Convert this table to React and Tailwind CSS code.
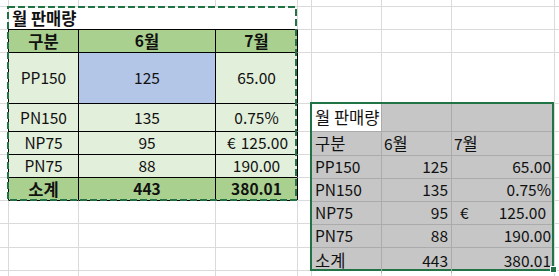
const grid = "border-l border-t border-[#dadada]";
const tb = "border-l border-t border-black";
const ko = "text-[16.5px]";

const rows = [
  { name: "PP150", jun: "125", jul: "65.00", h: true },
  { name: "PN150", jun: "135", jul: "0.75%" },
  { name: "NP75", jun: "95", jul: "125.00", euro: true },
  { name: "PN75", jun: "88", jul: "190.00" },
];

const pic = [
  ["구분", "6월", "7월", "head"],
  ["PP150", "125", "65.00"],
  ["PN150", "135", "0.75%"],
  ["NP75", "95", "125.00", "euro"],
  ["PN75", "88", "190.00"],
  ["소계", "443", "380.01"],
];

const Blank = ({ c }) => <div className={`${grid} ${c || ""}`} />;

const App = () => {
  return (
    <div className="relative w-[559px] h-[276px] overflow-hidden bg-white font-['Noto_Sans_CJK_KR',sans-serif] text-[15.5px] text-[#111]">
      {/* sheet */}
      <div className="-ml-px -mt-px w-[560px] grid grid-cols-[9px_70px_137px_82px_14px_70px_70px_103px_1fr] grid-rows-[7px_23px_23px_51px_28px_23px_23px_23px_23px_24px_23px_7px]">
        {/* row 1 */}
        {Array.from({ length: 9 }).map((_, i) => (
          <Blank key={"r0" + i} />
        ))}

        {/* title row */}
        <Blank />
        <div className={`${grid} ${ko} col-span-3 flex items-center pl-[3px] font-bold`}>월 판매량</div>
        {Array.from({ length: 5 }).map((_, i) => (
          <Blank key={"r1" + i} />
        ))}

        {/* header */}
        <Blank />
        <div className={`${tb} ${ko} bg-[#a9d08e] flex items-center justify-center font-bold`}>구분</div>
        <div className={`${tb} bg-[#a9d08e] flex items-center justify-center font-bold`}>
          6<span className={ko}>월</span>
        </div>
        <div className={`${tb} bg-[#a9d08e] flex items-center justify-center font-bold`}>
          7<span className={ko}>월</span>
        </div>
        <Blank c="!border-l-black" />
        <Blank />
        <Blank />
        <Blank />
        <Blank />

        {/* data */}
        {rows.map((r) => (
          <div key={r.name} className="contents">
            <Blank />
            <div className={`${tb} bg-[#e2efda] flex items-center justify-center`}>{r.name}</div>
            <div className={`${tb} ${r.h ? "bg-[#b4c6e7]" : "bg-[#e2efda]"} flex items-center justify-center`}>{r.jun}</div>
            {r.euro ? (
              <div className={`${tb} bg-[#e2efda] flex items-center justify-between pl-[11px] pr-[9px]`}>
                <span>€</span>
                <span>{r.jul}</span>
              </div>
            ) : (
              <div className={`${tb} bg-[#e2efda] flex items-center justify-center`}>{r.jul}</div>
            )}
            <Blank c="!border-l-black" />
            <Blank />
            <Blank />
            <Blank />
            <Blank />
          </div>
        ))}

        {/* total */}
        <Blank />
        <div className={`${tb} ${ko} bg-[#a9d08e] flex items-center justify-center font-bold`}>소계</div>
        <div className={`${tb} bg-[#a9d08e] flex items-center justify-center font-bold`}>443</div>
        <div className={`${tb} bg-[#a9d08e] flex items-center justify-center font-bold`}>380.01</div>
        <Blank c="!border-l-black" />
        <Blank />
        <Blank />
        <Blank />
        <Blank />

        {/* empty rows */}
        {Array.from({ length: 36 }).map((_, i) => (
          <Blank key={"e" + i} c={i > 0 && i < 4 ? "!border-t-black" : ""} />
        ))}
      </div>

      {/* copy marquee */}
      <svg className="absolute left-[7px] top-[6px] pointer-events-none" width="291" height="196">
        <rect x="1" y="1" width="288" height="193" fill="none" stroke="#217346" strokeWidth="2" strokeDasharray="7 3" />
      </svg>

      {/* pasted picture */}
      <div className="absolute left-[310px] top-[102px] w-[244px] h-[169px] border-2 border-[#217346] bg-[#c6c6c6]">
        <div className="grid h-full grid-cols-[69px_70px_1fr] grid-rows-[27px_24px_23px_23px_23px_23px_1fr]">
          <div className={`${ko} bg-white flex items-center pl-[3px]`}>월 판매량</div>
          <div className="border-l border-[#ababab]" />
          <div className="border-l border-[#ababab]" />
          {pic.map((p) => (
            <div key={p[0]} className="contents">
              <div className={`border-t border-[#ababab] flex items-center pl-[3px] ${p[0] === "구분" || p[0] === "소계" ? ko : ""}`}>
                {p[0]}
              </div>
              {p[3] === "head" ? (
                <div className="border-t border-l border-[#ababab] flex items-center pl-[2px]">
                  6<span className={ko}>월</span>
                </div>
              ) : (
                <div className="border-t border-l border-[#ababab] flex items-center justify-end pr-[3px]">{p[1]}</div>
              )}
              {p[3] === "head" ? (
                <div className="border-t border-l border-[#ababab] flex items-center pl-[2px]">
                  7<span className={ko}>월</span>
                </div>
              ) : p[3] === "euro" ? (
                <div className="border-t border-l border-[#ababab] flex items-center justify-between pl-[8px] pr-[6px]">
                  <span>€</span>
                  <span>{p[2]}</span>
                </div>
              ) : (
                <div className="border-t border-l border-[#ababab] flex items-center justify-end pr-[1px]">{p[2]}</div>
              )}
            </div>
          ))}
        </div>
      </div>

      {/* resize handle */}
      <div className="absolute left-[550px] top-[266px] w-[7px] h-[7px] bg-[#217346] border border-white" />
    </div>
  );
};

export default App;
